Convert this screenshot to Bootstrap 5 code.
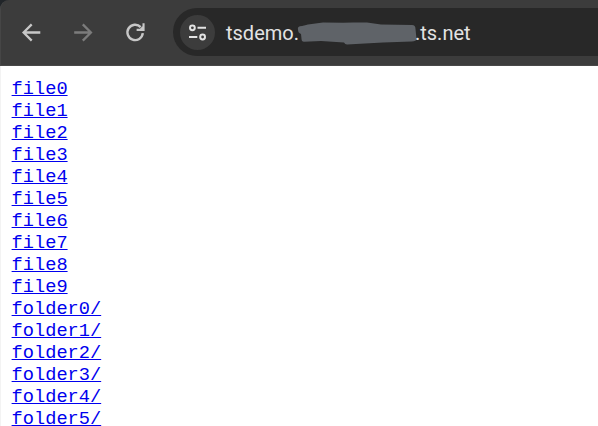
<!DOCTYPE html>
<html lang="en">
<head>
<meta charset="utf-8">
<title>tsdemo</title>
<link href="https://cdn.jsdelivr.net/npm/bootstrap@5.3.0/dist/css/bootstrap.min.css" rel="stylesheet">
<style>
body { background: #fff; height: 426px; font-family: Roboto, "Liberation Sans", sans-serif; }
.shell { background: #212529; }
.toolbar { height: 66px; background: #3c3c3c; border-left: 1px solid #464646; border-bottom: 1px solid #484848; border-top-left-radius: 9px; padding-left: 17px; }
.tool { width: 26px; height: 26px; color: #c7c7c7; }
.tool svg, .site-info svg { display: block; }
.tool-off { color: #7c7c7c; }
.gap-tools { gap: 26px; }
.omnibox { height: 48px; background: #282828; border-radius: 24px 0 0 24px; margin: 0 0 1px 25px; padding: 1px 0 0 7px; }
.site-info { width: 35px; height: 35px; background: #3c3c3c; }
.address { margin-left: 11px; font-size: 20px; line-height: 24px; color: #e3e3e3; }
.redaction { margin: 0 -2px 0 -2px; }
.listing { border-left: 1px solid #f3f3f3; height: 360px; padding: 12px 0 0 10.600px; font: 18.67px/22px "Liberation Mono", monospace; }
.listing a { color: #0000ee; text-decoration: underline; }
</style>
<script src="https://cdn.jsdelivr.net/npm/bootstrap@5.3.0/dist/js/bootstrap.bundle.min.js"></script>
</head>
<body class="overflow-hidden">
<header class="shell">
  <nav class="toolbar d-flex align-items-center" aria-label="Browser toolbar">
    <div class="d-flex gap-tools flex-shrink-0">
      <span class="tool"><svg width="26" height="26" viewBox="0 0 26 26" fill="none" stroke="currentColor" stroke-width="2.3"><path d="M22.3 12.500H6M13.7 4.400 5.6 12.500l8.1 8.1"/></svg></span>
      <span class="tool tool-off"><svg width="26" height="26" viewBox="0 0 26 26" fill="none" stroke="currentColor" stroke-width="2.3"><path d="M4.2 12.500h16.3M12.8 4.400l8.1 8.1-8.1 8.1"/></svg></span>
      <span class="tool"><svg width="26" height="26" viewBox="0 0 26 26" fill="none" stroke="currentColor" stroke-width="2.4"><path d="M20.8 13.2A7.7 7.7 0 1 1 18.7 7.1"/><path d="M22.6 3.2v7.8h-8v-2.200h3.300l2.600-2.600v-3z" fill="currentColor" stroke="none"/></svg></span>
    </div>
    <div class="omnibox d-flex align-items-center flex-grow-1">
      <span class="site-info rounded-circle d-flex align-items-center justify-content-center flex-shrink-0"><svg width="19" height="19" viewBox="0 0 19 19" fill="none" stroke="#e3e3e3" stroke-width="2"><circle cx="4.4" cy="4.8" r="2.4"/><path d="M9.5 4.8H18M1 14h8.3"/><circle cx="14.6" cy="14" r="2.4"/></svg></span>
      <div class="address d-flex align-items-center text-nowrap"><span>tsdemo.</span><svg class="redaction" width="120" height="24" viewBox="0 0 120 24"><path d="M1 8.500Q0 5 5 5L11 3.500 26 1.500l20 .3 10-.3 14 0 14 2 31 .5q3.500 0 3.500 4L119.500 18q0 2-5 2.500L86 21.500 50 23.500q-2 0-3-2L24 20 7 20.700q-2.500 0-2.500-3L4 13Q1 12 1 8.500z" fill="#5f6368"/></svg><span>.ts.net</span></div>
    </div>
  </nav>
</header>
<main class="listing d-flex flex-column align-items-start">
  <a href="#">file0</a>
  <a href="#">file1</a>
  <a href="#">file2</a>
  <a href="#">file3</a>
  <a href="#">file4</a>
  <a href="#">file5</a>
  <a href="#">file6</a>
  <a href="#">file7</a>
  <a href="#">file8</a>
  <a href="#">file9</a>
  <a href="#">folder0/</a>
  <a href="#">folder1/</a>
  <a href="#">folder2/</a>
  <a href="#">folder3/</a>
  <a href="#">folder4/</a>
  <a href="#">folder5/</a>
</main>
</body>
</html>
